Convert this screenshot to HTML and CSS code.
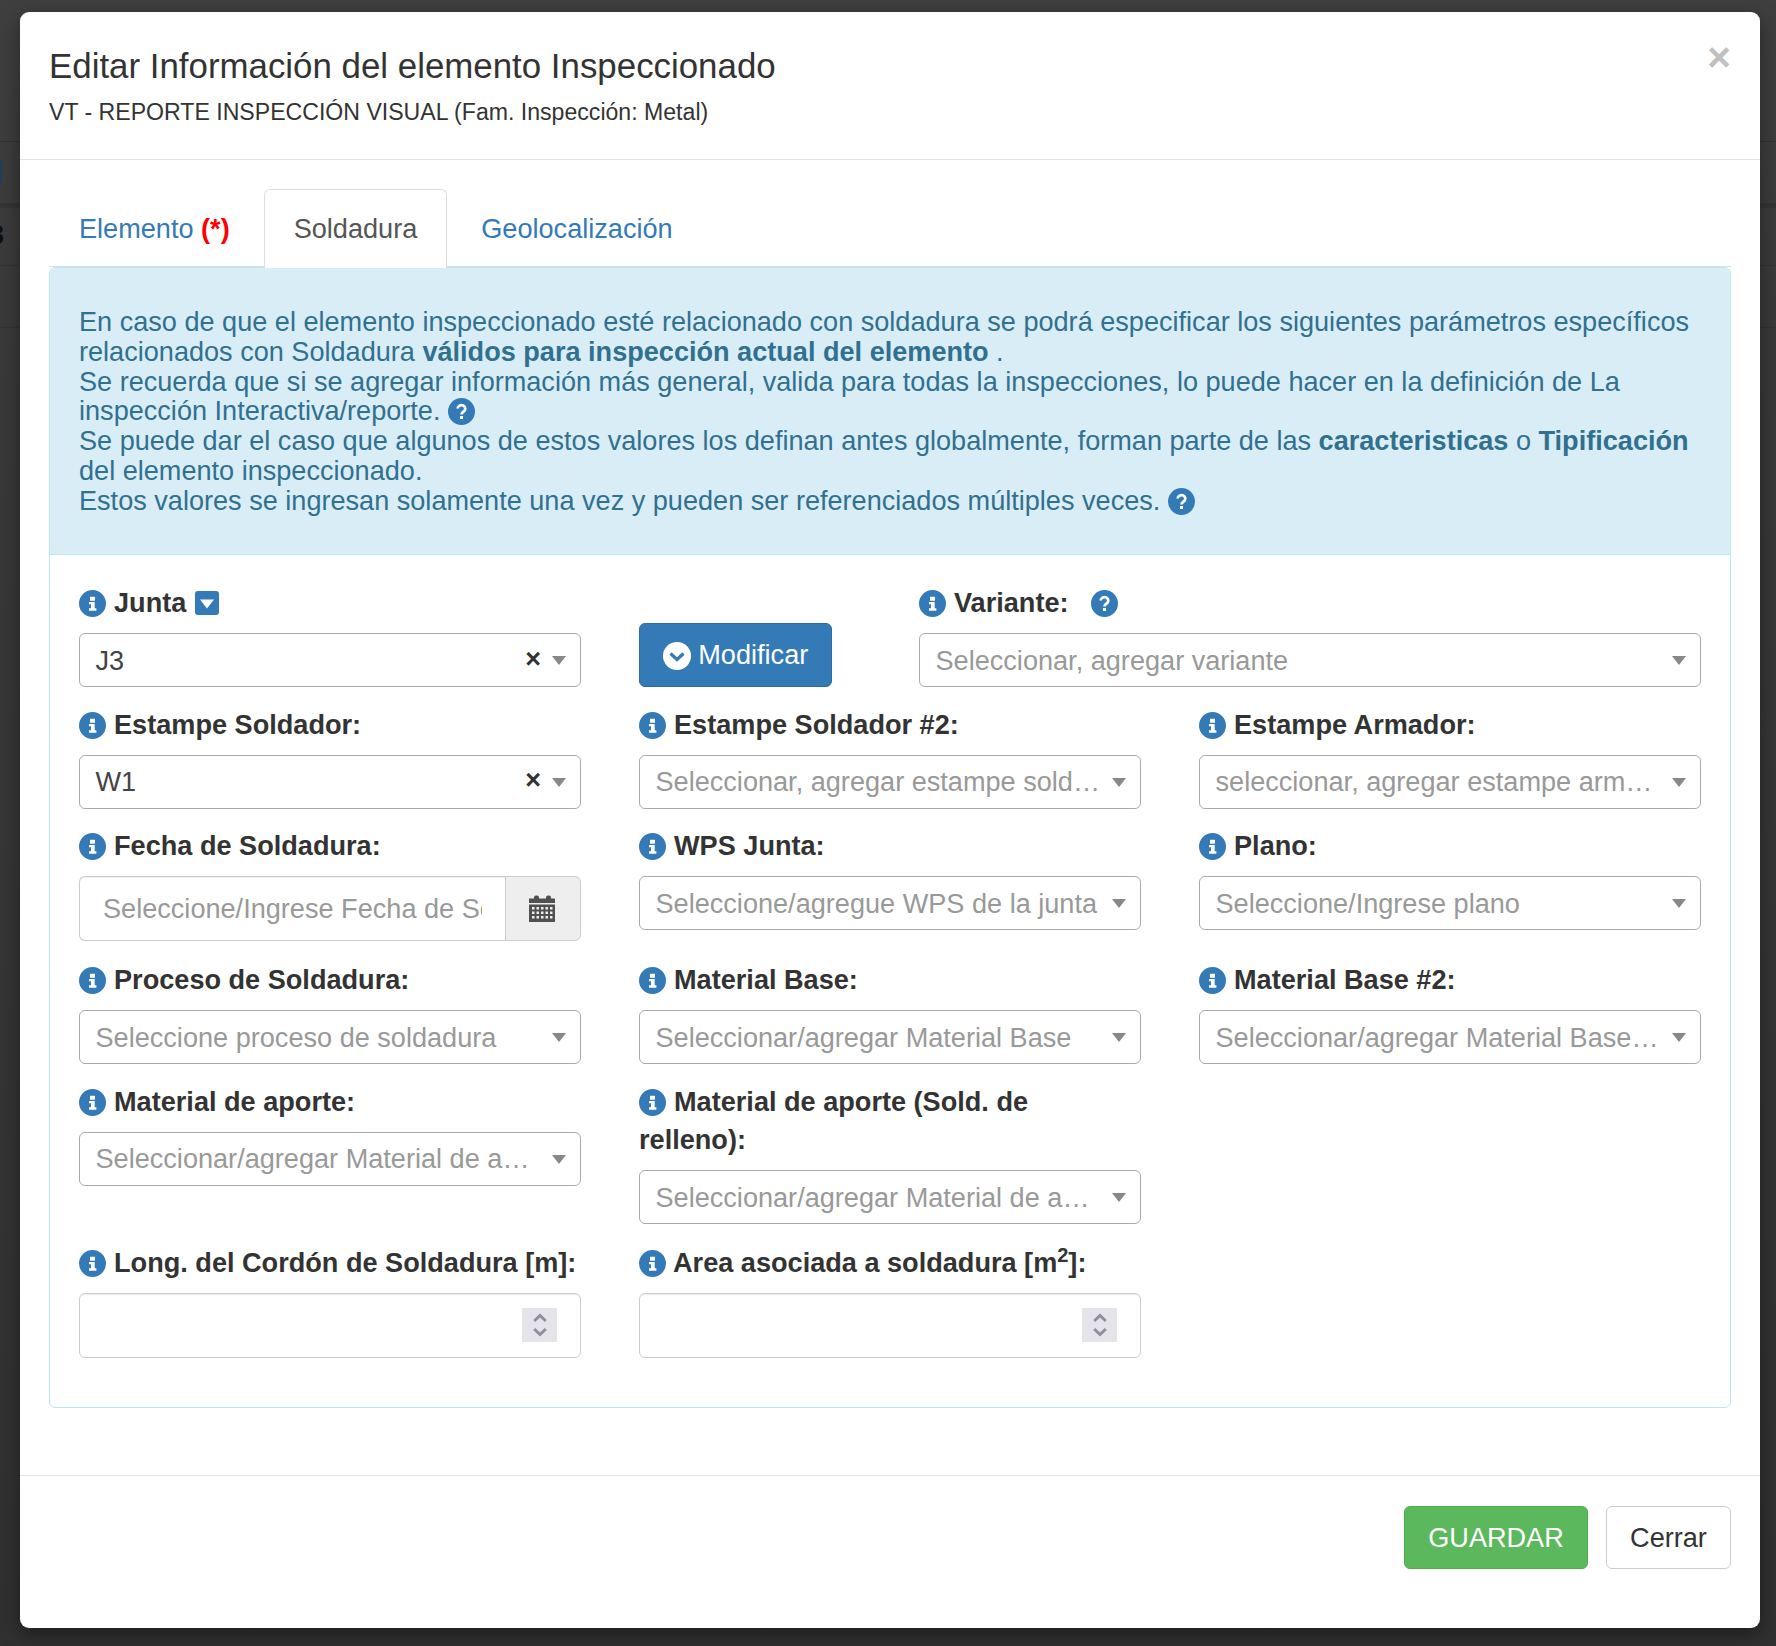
FILE: index.html
```html
<!DOCTYPE html>
<html lang="es">
<head>
<meta charset="utf-8">
<title>Editar Información</title>
<link rel="stylesheet" href="styles.css">
</head>
<body>
<svg class="sprites" width="0" height="0" aria-hidden="true">
  <symbol id="i-info" viewBox="0 0 27 27"><path fill-rule="evenodd" d="M13.500 0a13.500 13.500 0 1 1 0 27a13.500 13.500 0 1 1 0-27zM11 6.800v3.900h5V6.800zM10 11.900v2.400h2v3.900h-2v2.500h7.400v-2.500h-1.700v-6.300z"/></symbol>
  <symbol id="i-help" viewBox="0 0 27 27"><circle cx="13.500" cy="13.500" r="13.500"/><path d="M9.700 10.600a3.800 3.500 0 1 1 5.900 2.900c-1.400.9-2.100 1.500-2.100 3" fill="none" stroke="#fff" stroke-width="2.700"/><rect x="12" y="18" width="3" height="3" fill="#fff"/></symbol>
</svg>

<div class="backdrop">
  <div class="bg-row bg-row-a"><span class="bg-mark"></span></div>
  <div class="bg-row bg-row-b"><span class="bg-glyph">3</span></div>
  <div class="bg-row bg-row-c"></div>
  <div class="bg-row bg-row-d"></div>
</div>

<main class="modal">
  <header class="modal-header">
    <button class="close" type="button">×</button>
    <h4 class="modal-title">Editar Información del elemento Inspeccionado</h4>
    <div class="modal-sub">VT - REPORTE INSPECCIÓN VISUAL (Fam. Inspección: Metal)</div>
  </header>

  <section class="modal-body">
    <ul class="tabs">
      <li class="tab">Elemento <b class="req">(*)</b></li>
      <li class="tab tab-active">Soldadura</li>
      <li class="tab">Geolocalización</li>
    </ul>

    <div class="panel">
      <div class="alert">
        En caso de que el elemento inspeccionado esté relacionado con soldadura se podrá especificar los siguientes parámetros específicos relacionados con Soldadura <b>válidos para inspección actual del elemento</b> .<br>
        Se recuerda que si se agregar información más general, valida para todas la inspecciones, lo puede hacer en la definición de La inspección Interactiva/reporte. <svg class="ic ic-help"><use href="#i-help"/></svg><br>
        Se puede dar el caso que algunos de estos valores los definan antes globalmente, forman parte de las <b>caracteristicas</b> o <b>Tipificación</b> del elemento inspeccionado.<br>
        Estos valores se ingresan solamente una vez y pueden ser referenciados múltiples veces. <svg class="ic ic-help"><use href="#i-help"/></svg>
      </div>

      <div class="form-grid">
        <div class="group">
          <label class="lbl"><svg class="ic"><use href="#i-info"/></svg> Junta <svg class="ic-caret" viewBox="0 0 24 24"><rect x="0" y="0" width="24" height="24" rx="3" fill="#337ab7"/><path d="M5 8.500h14l-7 9z" fill="#fff"/></svg></label>
          <div class="select"><span class="val">J3</span><span class="clear">×</span><span class="arrow"></span></div>
        </div>
        <div class="wide-row">
          <div class="col-btn"><button class="btn btn-primary" type="button"><svg class="ic-chev" viewBox="0 0 28 28"><circle cx="14" cy="14" r="14" fill="#fff"/><path d="M7.500 11.500l6.500 6 6.500-6" fill="none" stroke="#337ab7" stroke-width="3.200"/></svg> Modificar</button></div>
          <div class="group">
            <label class="lbl"><svg class="ic"><use href="#i-info"/></svg> Variante: <svg class="ic ic-gap"><use href="#i-help"/></svg></label>
            <div class="select"><span class="ph">Seleccionar, agregar variante</span><span class="arrow"></span></div>
          </div>
        </div>

        <div class="group">
          <label class="lbl"><svg class="ic"><use href="#i-info"/></svg> Estampe Soldador:</label>
          <div class="select"><span class="val">W1</span><span class="clear">×</span><span class="arrow"></span></div>
        </div>
        <div class="group">
          <label class="lbl"><svg class="ic"><use href="#i-info"/></svg> Estampe Soldador #2:</label>
          <div class="select"><span class="ph">Seleccionar, agregar estampe soldador</span><span class="arrow"></span></div>
        </div>
        <div class="group">
          <label class="lbl"><svg class="ic"><use href="#i-info"/></svg> Estampe Armador:</label>
          <div class="select"><span class="ph">seleccionar, agregar estampe armador</span><span class="arrow"></span></div>
        </div>

        <div class="group">
          <label class="lbl"><svg class="ic"><use href="#i-info"/></svg> Fecha de Soldadura:</label>
          <div class="input-group">
            <input class="date-input" type="text" placeholder="Seleccione/Ingrese Fecha de Soldadura">
            <span class="addon"><svg class="ic-cal" viewBox="0 0 26 27"><path d="M5 2.500a2 2 0 0 1 2-2h1a2 2 0 0 1 2 2v1h7v-1a2 2 0 0 1 2-2h1a2 2 0 0 1 2 2v1h4V8H0V3.500h5z" fill="#505050"/><path fill-rule="evenodd" d="M0 9.500h26V27H0zM3 12v2.500h2.500V12zm4.500 0v2.500H10V12zm4.500 0v2.500h2.500V12zm4.500 0v2.500H19V12zm4.500 0v2.500h2.500V12zM3 16.500V19h2.500v-2.500zm4.500 0V19H10v-2.500zm4.500 0V19h2.500v-2.500zm4.500 0V19H19v-2.500zm4.500 0V19h2.500v-2.500zM3 21v2.500h2.500V21zm4.500 0v2.500H10V21zm4.500 0v2.500h2.500V21zm4.500 0v2.500H19V21zm4.500 0v2.500h2.500V21z" fill="#505050"/></svg></span>
          </div>
        </div>
        <div class="group">
          <label class="lbl"><svg class="ic"><use href="#i-info"/></svg> WPS Junta:</label>
          <div class="select"><span class="ph">Seleccione/agregue WPS de la junta</span><span class="arrow"></span></div>
        </div>
        <div class="group">
          <label class="lbl"><svg class="ic"><use href="#i-info"/></svg> Plano:</label>
          <div class="select"><span class="ph">Seleccione/Ingrese plano</span><span class="arrow"></span></div>
        </div>

        <div class="group">
          <label class="lbl"><svg class="ic"><use href="#i-info"/></svg> Proceso de Soldadura:</label>
          <div class="select"><span class="ph">Seleccione proceso de soldadura</span><span class="arrow"></span></div>
        </div>
        <div class="group">
          <label class="lbl"><svg class="ic"><use href="#i-info"/></svg> Material Base:</label>
          <div class="select"><span class="ph">Seleccionar/agregar Material Base</span><span class="arrow"></span></div>
        </div>
        <div class="group">
          <label class="lbl"><svg class="ic"><use href="#i-info"/></svg> Material Base #2:</label>
          <div class="select"><span class="ph">Seleccionar/agregar Material Base #2 adicional</span><span class="arrow"></span></div>
        </div>

        <div class="group">
          <label class="lbl"><svg class="ic"><use href="#i-info"/></svg> Material de aporte:</label>
          <div class="select"><span class="ph">Seleccionar/agregar Material de aporte</span><span class="arrow"></span></div>
        </div>
        <div class="group group-tall">
          <label class="lbl"><svg class="ic"><use href="#i-info"/></svg> Material de aporte (Sold. de<br>relleno):</label>
          <div class="select"><span class="ph">Seleccionar/agregar Material de aporte</span><span class="arrow"></span></div>
        </div>
        <div class="group group-empty"></div>

        <div class="group">
          <label class="lbl"><svg class="ic"><use href="#i-info"/></svg> Long. del Cordón de Soldadura [m]:</label>
          <div class="num"><span class="spin"><svg viewBox="0 0 14 26"><path d="M1.200 9L7 3.500 12.800 9M1.200 17L7 22.500 12.800 17" fill="none" stroke="#8e8e9c" stroke-width="3"/></svg></span></div>
        </div>
        <div class="group">
          <label class="lbl"><svg class="ic"><use href="#i-info"/></svg> Area asociada a soldadura [m<sup>2</sup>]:</label>
          <div class="num"><span class="spin"><svg viewBox="0 0 14 26"><path d="M1.200 9L7 3.500 12.800 9M1.200 17L7 22.500 12.800 17" fill="none" stroke="#8e8e9c" stroke-width="3"/></svg></span></div>
        </div>
      </div>
    </div>
  </section>

  <footer class="modal-footer">
    <button class="btn btn-success" type="button">GUARDAR</button>
    <button class="btn btn-default" type="button">Cerrar</button>
  </footer>
</main>
</body>
</html>
```
FILE: styles.css
```css
* { box-sizing: border-box; }
html, body { margin: 0; height: 100%; }
body {
  height: 1646px;
  overflow: hidden;
  background: linear-gradient(180deg, #3f3f3f 0, #3a3a3a 300px, #303030 1646px);
  font-family: "Liberation Sans", Arial, sans-serif;
  font-size: 27.125px;
  line-height: 30px;
  color: #333;
  padding: 12px 16px 18px 20px;
}
.sprites { position: absolute; }
.backdrop { position: absolute; left: 0; right: 0; top: 141px; }
.bg-row { height: 62px; border-top: 1px solid #333; position: relative; }
.bg-row-b { border-top: 5px solid #343434; }
.bg-mark { position: absolute; left: 0; top: 19px; width: 2px; height: 22px; background: #1f3f5f; }
.bg-glyph { position: absolute; left: -11px; top: 12px; color: #111; font-weight: 700; }

.modal {
  position: relative;
  width: 1740px;
  height: 1616px;
  background: #fff;
  border-radius: 9px;
  display: flex;
  flex-direction: column;
  box-shadow: 0 6px 20px rgba(0,0,0,.4);
}
.modal-header {
  height: 148px;
  padding: 31px 29px 0;
  border-bottom: 1px solid #e5e5e5;
  position: relative;
}
.close {
  position: absolute;
  right: 29px;
  top: 25px;
  padding: 0;
  border: 0;
  background: none;
  font: 700 40.500px/1 "Liberation Sans", Arial, sans-serif;
  color: #c0c0c0;
}
.modal-title { margin: 0; font-size: 34.875px; font-weight: 400; line-height: 46px; color: #333; }
.modal-sub { margin-top: 8px; font-size: 23.100px; line-height: 30px; color: #333; }

.modal-body { padding: 29px 29px 0; flex: 1; }
.tabs { list-style: none; margin: 0; padding: 0; display: flex; height: 78px; border-bottom: 1px solid #ddd; }
.tab {
  padding: 22px 29px 0;
  height: 79px;
  flex: none;
  color: #337ab7;
  font-size: 27.125px;
  line-height: 34px;
  border: 1px solid transparent;
  border-bottom: 0;
  border-radius: 6px 6px 0 0;
  margin-right: 4px;
  position: relative;
  z-index: 1;
  white-space: nowrap;
}
.tab-active { background: #fff; color: #555; border-color: #ddd; }
.req { color: #f00; }
.panel {
  border: 1px solid #bce8f1;
  border-radius: 6px;
  height: 1141px;
}
.alert {
  background: #d9edf7;
  color: #31708f;
  height: 287px;
  padding: 39px 29px 0;
  border-bottom: 1px solid #bce8f1;
  font-size: 27.100px;
  line-height: 29.800px;
  border-radius: 5px 5px 0 0;
}
.alert b { font-weight: 700; }
.ic { width: 27px; height: 27px; fill: #337ab7; vertical-align: -5px; }
.ic-gap { margin-left: 15px; }
.ic-caret { width: 24px; height: 24px; vertical-align: -3px; margin-left: 1px; }

.form-grid {
  display: grid;
  grid-template-columns: repeat(3, 560px);
  padding: 29px 0 0;
}
.group { padding: 0 29px; margin-bottom: 18.500px; min-width: 0; }
.group-tall { margin-bottom: 19.500px; }
.group-empty { visibility: hidden; }
.wide-row { grid-column: span 2; display: grid; grid-template-columns: 280px 840px; }
.col-btn { padding: 39px 0 0 29px; }
.lbl {
  display: block;
  font-weight: 700;
  font-size: 27.125px;
  line-height: 38.500px;
  margin-bottom: 10.500px;
  color: #333;
}
.lbl > .ic:first-child { margin-right: .5px; }
.lbl sup { font-size: 20px; line-height: 0; }
.select {
  height: 54px;
  border: 1px solid #aaa;
  border-radius: 6px;
  background: #fff;
  display: flex;
  align-items: center;
  padding: 1px 14px 0 15.500px;
  font-size: 27.125px;
  white-space: nowrap;
}
.val { flex: 1; color: #444; }
.ph { flex: 1; color: #999; min-width: 0; overflow: hidden; text-overflow: ellipsis; }
.clear { font-weight: 700; font-size: 27px; color: #333; margin-right: 3px; position: relative; top: -2px; }
.arrow { width: 0; height: 0; margin-left: 8px; border: 7px solid transparent; border-top: 9px solid #888; border-bottom: 0; }
.input-group { display: flex; height: 65px; margin-bottom: 1.500px; }
.date-input {
  flex: 1;
  min-width: 0;
  border: 1px solid #ccc;
  border-right: 0;
  border-radius: 6px 0 0 6px;
  padding: 1px 23px 0;
  font: 27.125px "Liberation Sans", Arial, sans-serif;
  box-shadow: inset 0 1px 1px rgba(0,0,0,.075);
  color: #555;
}
.date-input::placeholder { color: #999; opacity: 1; }
.addon {
  width: 76px;
  border: 1px solid #ccc;
  border-radius: 0 6px 6px 0;
  background: #eee;
  display: flex;
  align-items: center;
  justify-content: center;
  padding-right: 3px;
}
.ic-cal { width: 26px; height: 27px; }
.num {
  height: 65px;
  border: 1px solid #ccc;
  border-radius: 6px;
  box-shadow: inset 0 1px 1px rgba(0,0,0,.075);
  display: flex;
  justify-content: flex-end;
  align-items: center;
  padding-right: 23px;
}
.spin { width: 35px; height: 34px; background: #e4e4ea; display: flex; align-items: center; justify-content: center; }
.spin svg { width: 14px; height: 26px; }

.btn {
  font: 27.125px "Liberation Sans", Arial, sans-serif;
  border-radius: 6px;
  border: 1px solid transparent;
  cursor: pointer;
}
.btn-primary { width: 193px; height: 64px; background: #337ab7; border-color: #2e6da4; color: #fff; padding: 0; }
.ic-chev { width: 28px; height: 28px; vertical-align: -6px; }
.modal-footer {
  height: 153px;
  border-top: 1px solid #e5e5e5;
  padding: 30px 29px 0;
  display: flex;
  justify-content: flex-end;
  gap: 18px;
}
.btn-success { width: 184px; height: 63px; background: #5cb85c; border-color: #4cae4c; color: #fff; }
.btn-default { width: 125px; height: 63px; background: #fff; border-color: #ccc; color: #333; }
```
